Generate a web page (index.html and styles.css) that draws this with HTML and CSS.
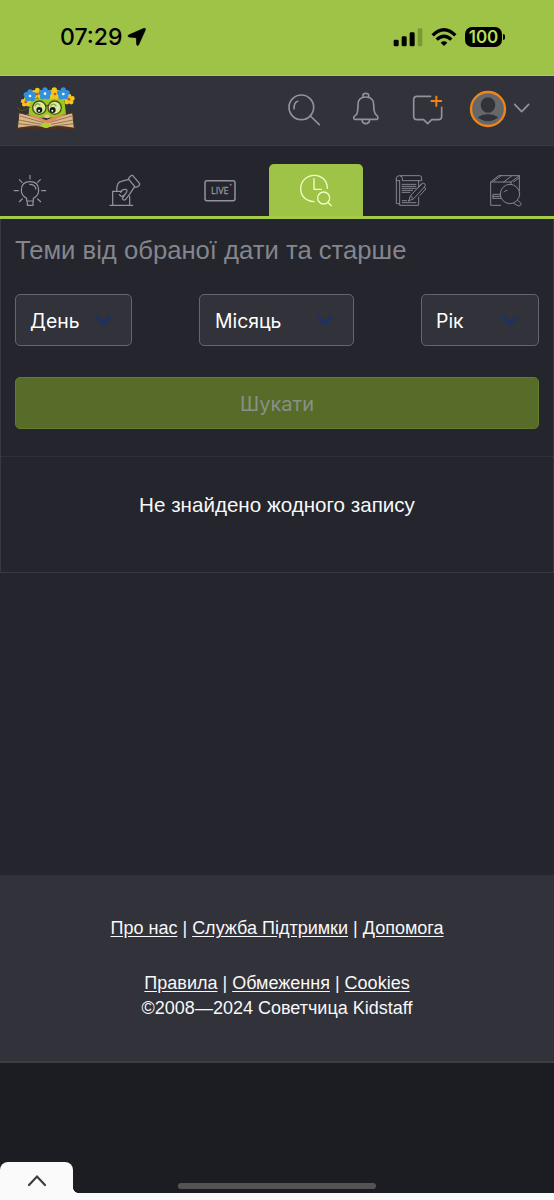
FILE: index.html
```html
<!DOCTYPE html>
<html lang="uk">
<head>
<meta charset="utf-8">
<meta name="viewport" content="width=device-width, initial-scale=1">
<title>Советчица Kidstaff</title>
<link rel="stylesheet" href="styles.css">
</head>
<body>
<div class="status">
  <div class="clock"><span class="time">07:29</span>
    <svg width="20" height="20" viewBox="381 83 60 60"><path d="M432 87Q438 86 436 92L416 136Q413 142 410 136L409 115L387 113Q381 111 386 107Z" stroke="#000" stroke-width="2"/></svg>
  </div>
  <div class="signals">
    <svg width="30" height="20" viewBox="346 80 90 60"><rect x="348" y="118" width="15" height="20" rx="4"/><rect x="372" y="108" width="15" height="30" rx="4"/><rect x="396" y="96" width="15" height="42" rx="4"/><rect x="420" y="84" width="14" height="54" rx="4" opacity=".22"/></svg>
    <svg width="26" height="20" viewBox="460 80 78 60" fill="none" stroke="#000" stroke-width="10"><path d="M465 105Q499 71 533 105M477 118Q499 97 521 118"/><path d="M489 127Q499 119 509 127L499 137Z" fill="#000" stroke="none"/></svg>
    <span class="battery">100</span>
  </div>
</div>

<header class="header">
  <svg class="logo" width="60" height="46" viewBox="48 255 180 138">
    <path d="M88 295Q135 285 193 295L199 350H86Z" fill="#98c91e"/>
    <path d="M53 318Q58 332 73 327L90 319" fill="none" stroke="#5b5020" stroke-width="3"/>
    <path d="M57 335Q96 343 137 360Q177 343 218 335L223 383Q180 371 139 381Q99 371 52 383Z" fill="#d8b889" stroke="#49311f" stroke-width="3"/>
    <path d="M60 345L132 365M57 357L125 370M55 368L120 375M216 345L146 365M219 357L153 370M222 368L160 375" stroke="#795035" stroke-width="2"/>
    <path d="M78 339Q110 342 138 358Q170 342 200 339L143 368Z" fill="#d98d60"/>
    <path d="M53 383Q97 377 137 384Q180 377 223 383" fill="none" stroke="#51301c" stroke-width="5"/>
    <g fill="#dce9a0" stroke="#4d4b16" stroke-width="4"><circle cx="118" cy="320" r="20"/><circle cx="164" cy="320" r="20"/><path d="M138 315Q141 311 144 315" fill="none"/></g>
    <path d="M104 316Q111 302 121 313M151 316Q159 303 169 315" stroke="#8ba64b" stroke-width="4" fill="none"/>
    <g fill="#121a12"><circle cx="118" cy="327" r="9"/><circle cx="158" cy="327" r="9"/></g><g fill="#fff"><circle cx="117" cy="329" r="3"/><circle cx="157" cy="329" r="3"/></g>
    <ellipse cx="141" cy="346" rx="8" ry="6" fill="#eec08d"/><ellipse cx="138" cy="373" rx="12" ry="8" fill="#aad820"/>
    <defs><g id="flower"><circle cy="-11" r="8"/><circle cx="11" cy="-3" r="8"/><circle cx="7" cy="9" r="8"/><circle cx="-7" cy="9" r="8"/><circle cx="-11" cy="-3" r="8"/><circle r="7"/></g></defs>
    <g fill="#f5c51f"><use href="#flower" transform="translate(78 303) scale(.8)"/><use href="#flower" transform="translate(112 277) scale(.9)"/><use href="#flower" transform="translate(163 278)"/><use href="#flower" transform="translate(207 295) scale(.9)"/></g>
    <g fill="#3291dc"><use href="#flower" x="90" y="284"/><use href="#flower" transform="translate(135 278)"/><use href="#flower" x="190" y="278"/></g>
    <g fill="#c85419"><circle cx="77" cy="303" r="4"/><circle cx="112" cy="279" r="4"/><circle cx="165" cy="279" r="4"/><circle cx="207" cy="295" r="4"/></g><g fill="#fff"><circle cx="90" cy="285" r="4"/><circle cx="135" cy="278" r="4"/><circle cx="190" cy="279" r="4"/></g>
  </svg>
  <div class="actions">
    <svg class="search" width="33" height="38" viewBox="30 270 99 114"><circle cx="73" cy="322" r="37"/><path d="M100 348L127 374M51 326Q51 308 62 304"/></svg>
    <svg class="bell" width="28" height="38" viewBox="225 270 84 114"><path d="M258 292V286Q258 280 266 280Q275 280 275 286V292M230 354Q229 350 238 344Q243 337 243 314Q243 291 266 291Q290 291 290 314Q290 337 297 344Q304 350 303 354Q303 358 299 358H234Q230 358 230 354ZM255 359Q256 371 266 371Q277 371 278 359"/></svg>
    <svg class="message" width="32" height="38" viewBox="405 270 96 114"><path d="M461 289H420Q410 289 410 299V349Q410 359 420 359H440L452 371L464 359H484Q494 359 494 349V322"/><path class="plus" d="M478 287V320M461 303H495"/></svg>
    <svg class="avatar" width="38" height="38" viewBox="576 270 114 114"><circle cx="633" cy="327" r="51" fill="#666769" stroke="#ef861c" stroke-width="7"/><g fill="#32333a" stroke="none"><ellipse cx="633" cy="315" rx="22" ry="23"/><path d="M602 352Q616 342 633 343Q650 342 664 352Q633 376 602 352Z"/></g></svg>
    <svg class="chevron" width="17" height="38" viewBox="708 270 51 114"><path d="M713 313L734 335L755 313"/></svg>
  </div>
</header>

<nav class="tabs">
  <a class="tab"><svg viewBox="35 66 108 108"><path d="M79 153V145Q63 137 63 121Q63 95 89 95Q115 95 115 121Q115 137 99 145V153ZM81 154V166H98V154M88 103Q104 103 107 117M89 76V87M42 122H54M124 122H136M57 89L65 97M120 89L112 97M57 155L66 147M121 155L112 147"/></svg></a>
  <a class="tab"><svg viewBox="321 66 108 108"><path d="M330 166H398M338 166V124H365M389 139V166M350 123Q350 95 364 94L386 88M386 88Q384 84 393 77Q397 74 401 80L419 101Q421 105 411 111Q406 113 403 108L386 88M404 110L390 131L378 147Q370 154 367 145L375 133M362 127Q364 117 378 118Q385 121 376 132Q366 145 358 134"/></svg></a>
  <a class="tab"><svg viewBox="607 66 108 108"><rect x="616" y="92" width="90" height="60" rx="6" stroke-width="4.5"/><text x="634" y="132" textLength="53" lengthAdjust="spacingAndGlyphs">LIVE</text><circle cx="693" cy="104" r="1"/></svg></a>
  <a class="tab active"><svg viewBox="62 66 108 108"><path d="M110 155C84 154 70 136 70 116C70 93 89 76 111 76C134 76 150 93 150 115M110 86V118H132"/><circle cx="139" cy="144" r="18"/><path d="M151 157L162 167"/></svg></a>
  <a class="tab"><svg class="thin" viewBox="348 66 108 108"><path d="M368 92H358V86Q358 77 367 77H428Q434 77 434 84V92H376V84Q376 78 370 78M358 86V161H367M368 92V166H425V141M425 92V111M375 103H417M375 109H417M375 115H417M375 121H407M375 127H399M376 152H389M376 158H417M395 153L400 138L434 101Q439 97 444 102Q447 106 442 111L410 146L395 153ZM400 138L409 146M421 116L434 102M443 111L446 117L429 136"/></svg></a>
  <a class="tab"><svg class="thin" viewBox="634 66 108 108"><path d="M672 166H642V96L666 77H728V122M642 96H703L728 77M703 96V103M651 93L674 77M681 96L706 77M711 96L728 83M649 145V133H671M649 145H672M649 139H671M711 160L725 168Q732 169 734 161L722 150"/><circle cx="700" cy="132" r="29"/><path d="M682 126Q686 121 691 121"/></svg></a>
</nav>

<main class="panel">
  <form class="filter">
    <h1>Теми від обраної дати та старше</h1>
    <div class="selects">
      <div class="select day"><span>День</span><svg viewBox="0 0 18 14"><path d="M2 3L9 10L16 3"/></svg></div>
      <div class="select month"><span>Місяць</span><svg viewBox="0 0 18 14"><path d="M2 3L9 10L16 3"/></svg></div>
      <div class="select year"><span>Рік</span><svg viewBox="0 0 18 14"><path d="M2 3L9 10L16 3"/></svg></div>
    </div>
    <button class="submit" type="button" disabled>Шукати</button>
  </form>
  <p class="empty">Не знайдено жодного запису</p>
</main>

<footer class="footer">
  <p class="about"><a href="#">Про нас</a> | <a href="#">Служба Підтримки</a> | <a href="#">Допомога</a></p>
  <p class="rules"><a href="#">Правила</a> | <a href="#">Обмеження</a> | <a href="#">Cookies</a></p>
  <p class="copyright">©2008—2024 Советчица Kidstaff</p>
</footer>

<div class="bottom">
  <div class="drawer"><svg width="20" height="13" viewBox="0 0 20 13"><path d="M2 11L10 2.5L18 11"/></svg></div>
  <div class="home"></div>
</div>
</body>
</html>
```
FILE: styles.css
```css
* { box-sizing: border-box; }
body { margin: 0; height: 1200px; display: flex; flex-direction: column; overflow: hidden; background: #24252d; color: #f8f8f8; font-family: "Liberation Sans", sans-serif; }
p, h1 { margin: 0; font-weight: 400; white-space: nowrap; }
svg { display: block; flex: none; }

.status { height: 76px; flex: none; display: flex; justify-content: space-between; align-items: center; padding: 0 48px 1px 60px; background: #9ec347; border-bottom: 1px solid #aad04f; color: #000; font-family: Inter, sans-serif; }
.clock { display: flex; align-items: center; gap: 4px; }
.time { font-size: 23px; font-weight: 500; width: 63px; }
.signals { display: flex; align-items: center; gap: 8px; }
.battery { position: relative; width: 37px; height: 20px; margin-right: 4px; border-radius: 7px; background: #000; color: #b5df54; font-size: 17px; font-weight: 600; line-height: 20px; text-align: center; }
.battery::after { content: ""; position: absolute; right: -3px; top: 7px; width: 2px; height: 6px; background: #000; border-radius: 0 2px 2px 0; }

.header { height: 70px; flex: none; display: flex; justify-content: space-between; align-items: center; padding: 0 24px 3px 16px; background: #31323a; border-bottom: 1px solid #3a3b41; }
.actions { display: flex; align-items: center; fill: none; stroke: #92939a; stroke-width: 5; stroke-linecap: round; stroke-linejoin: round; }
.bell, .message { margin-left: 32px; }
.avatar { margin-left: 25px; }
.chevron { margin-left: 6px; }
.plus { stroke: #ee8318; stroke-width: 6; stroke-linecap: butt; }

.tabs { height: 73px; flex: none; display: grid; grid-template-columns: repeat(6, 1fr); width: 572px; margin-left: -18px; padding-top: 18px; border-bottom: 3px solid #a4ca49; background: #24252d; }
.tab { display: flex; justify-content: center; padding-top: 8px; }
.tab svg { width: 36px; height: 36px; fill: none; stroke: #92939c; stroke-width: 3.7; stroke-linecap: round; stroke-linejoin: round; }
.tab .thin { stroke-width: 3; stroke: #85868d; }
.tab text { font: 28px "Open Sans", sans-serif; fill: #92939c; stroke: #92939c; stroke-width: .8; }
.active { margin-left: 1px; background: #9ec347; border-radius: 5px 5px 0 0; }
.tab.active svg { stroke: #f4ffc8; stroke-width: 4; }

.panel { height: 354px; flex: none; border: 1px solid #383940; border-top: 0; }
.filter { height: 238px; padding: 15px 14px 0 14px; border-bottom: 1px dotted #373840; }
h1 { height: 33px; line-height: 33px; font-size: 25.65px; color: #85868d; }
.selects { display: flex; justify-content: space-between; margin-top: 27px; }
.select { height: 52px; display: flex; align-items: center; justify-content: space-between; padding: 2px 19px 0 14px; background: #31323a; border: 1px solid #65666d; border-radius: 5px; font: 19.4px Inter, sans-serif; color: #fff; }
.select svg { width: 18px; height: 14px; fill: none; stroke: #1e3262; stroke-width: 3.5; }
.day { width: 117px; }
.month { width: 155px; padding-left: 15px; }
.year { width: 118px; }
.submit { display: block; width: 100%; height: 52px; margin-top: 31px; padding: 2px 0 0; border: 1px solid #627b2d; border-radius: 5px; background: #566c28; color: #8a9087; font: 20px Inter, sans-serif; }
.empty { margin-top: 32px; line-height: 32px; text-align: center; font-size: 20.6px; }

.footer { height: 188px; flex: none; margin-top: 302px; padding-top: 41px; background: #31323a; border-bottom: 2px solid #3c3d45; text-align: center; font-size: 18px; line-height: 24px; }
.footer a { color: inherit; text-underline-offset: 2px; }
.rules { margin-top: 31px; }
.copyright { margin-top: 1px; }

.bottom { position: relative; height: 137px; flex: none; background: #1c1d22; border-bottom: 7px solid #fafafa; display: flex; align-items: flex-end; }
.drawer { position: relative; width: 73px; height: 31px; display: flex; justify-content: center; align-items: center; padding-top: 6px; background: #fafafa; border-radius: 8px 8px 0 0; }
.drawer::after { content: ""; position: absolute; left: 73px; bottom: 0; width: 5px; height: 5px; background: radial-gradient(circle at 100% 0, #1c1d22 4.5px, #fafafa 5px); }
.drawer svg { fill: none; stroke: #3c3c42; stroke-width: 2.2; stroke-linecap: round; }
.home { width: 198px; height: 6px; margin: 0 0 4px 105px; border-radius: 3px; background: #545454; }
```
